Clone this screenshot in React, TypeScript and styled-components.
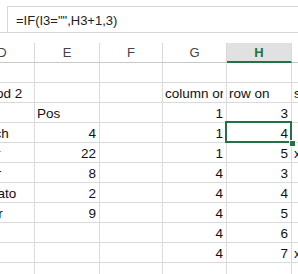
import * as React from 'react';
import styled, { createGlobalStyle } from 'styled-components';

type CellValue = string | number | null;

const COLUMNS = ['D', 'E', 'F', 'G', 'H', 'I'];
const WIDTHS = [65, 65, 63, 64, 65, 64];
const ACTIVE_COL = 4;

const ROWS: CellValue[][] = [
  [null, null, null, null, null, null],
  ['Period 2', null, null, 'column or', 'row on', 'shift'],
  [null, 'Pos', null, 1, 3, null],
  ['Lunch', 4, null, 1, 4, null],
  ['Pear', 22, null, 1, 5, 'x'],
  ['Liver', 8, null, 4, 3, null],
  ['Tomato', 2, null, 4, 4, null],
  ['Flour', 9, null, 4, 5, null],
  [null, null, null, 4, 6, null],
  [null, null, null, 4, 7, 'x'],
  [null, null, null, null, null, null],
];

const SELECTED = { row: 3, col: 4 };

const GlobalStyle = createGlobalStyle`
  html, body {
    margin: 0;
    padding: 0;
    background: #fff;
    overflow: hidden;
  }
  body {
    font-family: "Liberation Sans", Arial, sans-serif;
    color: #000;
  }
`;

const Page = styled.div`
  width: 298px;
  height: 274px;
  overflow: hidden;
  background: #fff;
`;

const FormulaBar = styled.div`
  height: 33px;
  box-sizing: border-box;
  border-bottom: 1px solid #d6d6d6;
  padding: 6px 0 0 7px;
`;

const FormulaInput = styled.div`
  height: 26px;
  box-sizing: border-box;
  border-top: 1px solid #d6d6d6;
  border-left: 1px solid #d6d6d6;
  padding-left: 8px;
  font-size: 13px;
  line-height: 27px;
  color: #222;
  white-space: nowrap;
`;

const Sheet = styled.div`
  margin-top: 10px;
  margin-left: -30px;
  display: grid;
  grid-template-columns: ${WIDTHS.map((w) => `${w}px`).join(' ')};
  grid-auto-rows: 20px;
`;

const HeaderCell = styled.div<{ $active?: boolean }>`
  box-sizing: border-box;
  display: flex;
  align-items: center;
  justify-content: center;
  font-size: 13px;
  border-right: 1px solid #d9d9d9;
  border-bottom: ${(p) => (p.$active ? '2px solid #217346' : '1px solid #c8c8c8')};
  background: ${(p) => (p.$active ? '#e1e1e1' : '#fff')};
  color: ${(p) => (p.$active ? '#217346' : '#444')};
  font-weight: ${(p) => (p.$active ? 'bold' : 'normal')};
`;

const Cell = styled.div<{ $numeric?: boolean; $selected?: boolean }>`
  position: relative;
  z-index: ${(p) => (p.$selected ? 2 : 'auto')};
  box-sizing: border-box;
  border-right: 1px solid #dadada;
  border-bottom: 1px solid #dadada;
  padding: 1px 3px 0 2px;
  font-size: 13.5px;
  line-height: 19px;
  color: #111;
  white-space: nowrap;
  text-align: ${(p) => (p.$numeric ? 'right' : 'left')};
`;

const CellText = styled.div`
  overflow: hidden;
`;

const Selection = styled.div`
  position: absolute;
  left: -2px;
  top: -2px;
  right: -1px;
  bottom: -1px;
  border: 2px solid #217346;
  pointer-events: none;
`;

const FillHandle = styled.div`
  position: absolute;
  right: -5px;
  bottom: -5px;
  width: 5px;
  height: 5px;
  background: #217346;
  box-shadow: 0 0 0 1px #fff;
`;

const App: React.FC = () => (
  <Page>
    <GlobalStyle />
    <FormulaBar>
      <FormulaInput>=IF(I3="",H3+1,3)</FormulaInput>
    </FormulaBar>
    <Sheet>
      {COLUMNS.map((c, i) => (
        <HeaderCell key={c} $active={i === ACTIVE_COL}>
          {c}
        </HeaderCell>
      ))}
      {ROWS.map((row, r) =>
        row.map((value, c) => {
          const selected = r === SELECTED.row && c === SELECTED.col;
          return (
            <Cell key={`${r}-${c}`} $numeric={typeof value === 'number'} $selected={selected}>
              <CellText>{value}</CellText>
              {selected && (
                <Selection>
                  <FillHandle />
                </Selection>
              )}
            </Cell>
          );
        })
      )}
    </Sheet>
  </Page>
);

export default App;
